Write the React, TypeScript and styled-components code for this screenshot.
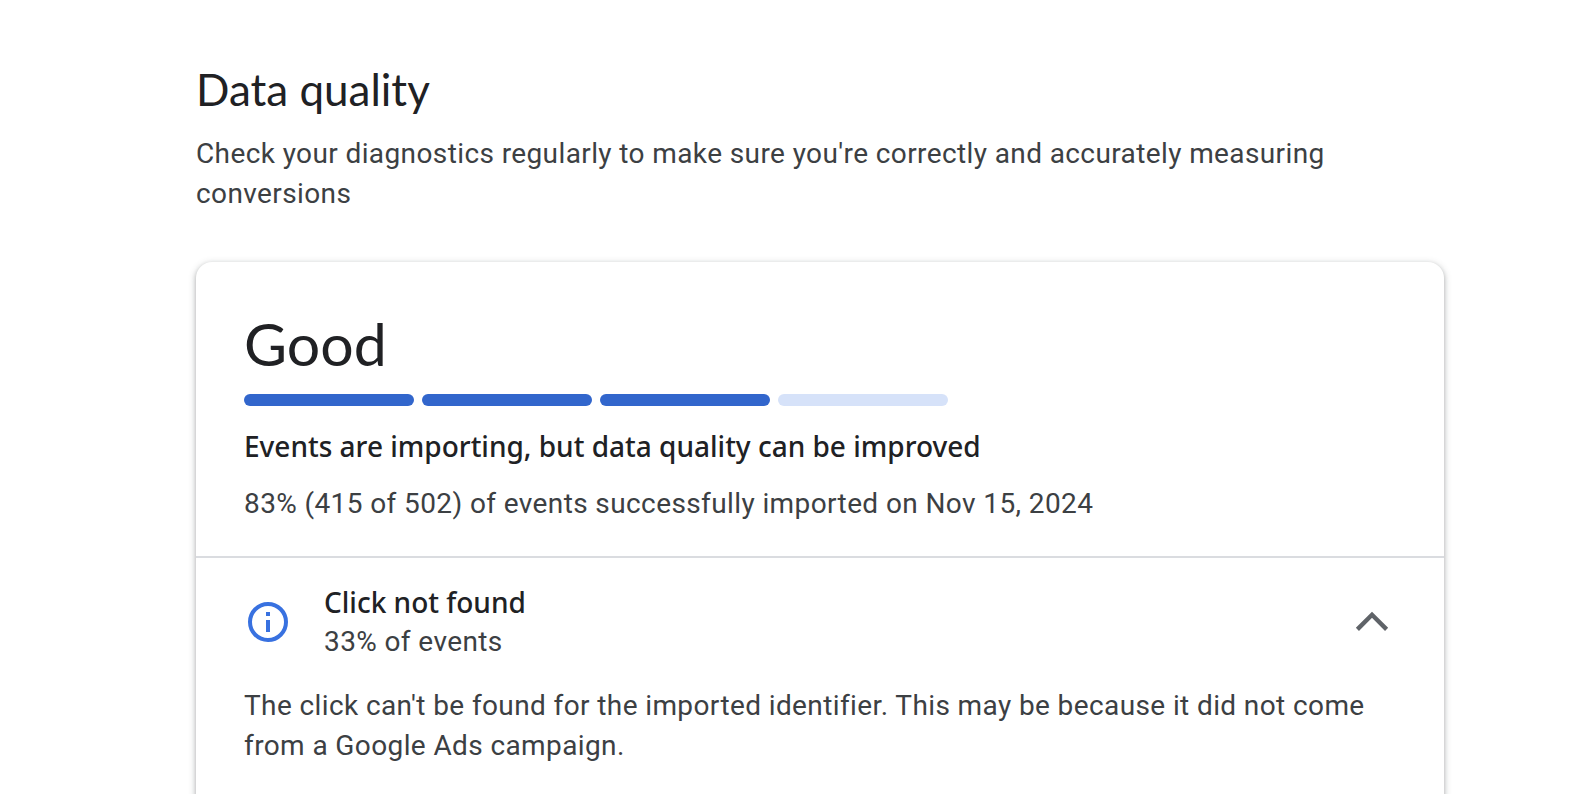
import React, { useState } from "react";
import styled, { createGlobalStyle } from "styled-components";

const GlobalStyle = createGlobalStyle`
  *, *::before, *::after { box-sizing: border-box; }
  html { scrollbar-width: none; }
  body { margin: 0; background: #fff; color: #3c4043; font-family: Roboto, sans-serif; }
  h1, h2, h3, p { margin: 0; }
`;

const Page = styled.main`
  height: 100vh;
  overflow-y: auto;
  scrollbar-width: none;
  padding: 64px 144px 0 196px;
`;

const Title = styled.h1`
  font: 400 44px/50px Lato, sans-serif;
  color: #202124;
`;

const Body = styled.p`
  font: 400 28px/40px Roboto, sans-serif;
  letter-spacing: 0.014em;
  color: #3c4043;
`;

const Intro = styled(Body)`
  margin: 20px 0 48px;
`;

const Card = styled.section`
  border-radius: 16px;
  background: #fff;
  box-shadow: 0 2px 4px rgba(60, 64, 67, 0.3), 0 2px 6px 2px rgba(60, 64, 67, 0.15);
`;

const Summary = styled.div`
  padding: 56px 48px 32px;
  border-bottom: 2px solid #dadce0;
`;

const Rating = styled.h2`
  font: 400 59px/52px Lato, sans-serif;
  color: #202124;
`;

const Meter = styled.div`
  display: flex;
  gap: 8px;
  margin: 24px 0 20px;
`;

const Segment = styled.span<{ $filled: boolean }>`
  width: 170px;
  height: 12px;
  border-radius: 6px;
  background: ${(p) => (p.$filled ? "#3266cc" : "#d6e2f9")};
`;

const Heading = styled.h3`
  font: 500 28px/40px "Noto Sans", sans-serif;
  color: #202124;
`;

const Stats = styled(Body)`
  margin-top: 18px;
`;

const Issue = styled.div`
  padding: 24px 48px 48px;
`;

const IssueHeader = styled.button`
  display: flex;
  align-items: center;
  width: 100%;
  padding: 0;
  border: 0;
  background: none;
  text-align: left;
  cursor: pointer;
`;

const IssueText = styled.div`
  flex: 1;
  margin-left: 32px;
`;

const Detail = styled(Body)`
  margin-top: 24px;
`;

const InfoIcon = () => (
  <svg width="48" height="48" viewBox="0 0 24 24" fill="none" stroke="#3871e0" strokeWidth="2" aria-hidden="true">
    <circle cx="12" cy="12" r="9" />
    <path d="M12 7v2M12 11v6" />
  </svg>
);

const Chevron = () => (
  <svg width="48" height="48" viewBox="0 0 24 24" fill="none" stroke="#5f6368" strokeWidth="2.2" aria-hidden="true">
    <path d="M4.700 15.700 12 8.400l7.300 7.300" />
  </svg>
);

export default function App() {
  const [open, setOpen] = useState(true);
  return (
    <Page>
      <GlobalStyle />
      <Title>Data quality</Title>
      <Intro>Check your diagnostics regularly to make sure you're correctly and accurately measuring conversions</Intro>
      <Card>
        <Summary>
          <Rating>Good</Rating>
          <Meter role="img" aria-label="3 of 4">
            {[0, 1, 2, 3].map((i) => <Segment key={i} $filled={i < 3} />)}
          </Meter>
          <Heading>Events are importing, but data quality can be improved</Heading>
          <Stats>83% (415 of 502) of events successfully imported on Nov 15, 2024</Stats>
        </Summary>
        <Issue>
          <IssueHeader type="button" aria-expanded={open} onClick={() => setOpen(!open)}>
            <InfoIcon />
            <IssueText>
              <Heading as="div">Click not found</Heading>
              <Body as="div">33% of events</Body>
            </IssueText>
            <Chevron />
          </IssueHeader>
          {open && <Detail>The click can't be found for the imported identifier. This may be because it did not come from a Google Ads campaign.</Detail>}
        </Issue>
      </Card>
    </Page>
  );
}
